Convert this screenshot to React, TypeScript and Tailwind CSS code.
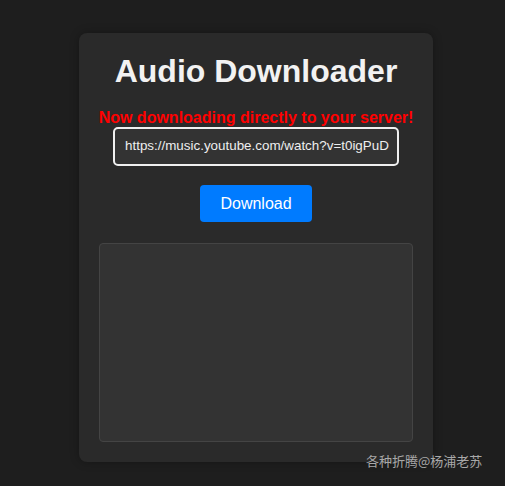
export default function App() {
  return (
    <div className="min-h-[486px] w-full bg-[#1e1e1e] pt-[33px] relative" style={{ fontFamily: '"Liberation Sans", Arial, sans-serif' }}>
      <div className="ml-[79px] w-[354px] rounded-[8px] bg-[#2a2a2a] p-5 flex flex-col items-center shadow-[0_0_10px_rgba(0,0,0,0.3)]">
        <h1 className="text-[32px] leading-[36px] font-bold text-[#f2f2f2]">Audio Downloader</h1>
        <p className="mt-5 text-[16px] leading-[18px] font-bold text-[#ff0000] whitespace-nowrap">Now downloading directly to your server!</p>
        <div className="w-[286px] h-[39px] rounded-[5px] border-2 border-[#f0f0f0] bg-[#333333] pl-[10px] flex items-center overflow-hidden">
          <span className="text-[13.4px] text-[#eeeeee] whitespace-nowrap">https://music.youtube.com/watch?v=t0igPuD</span>
        </div>
        <button className="mt-[19px] w-[112px] h-[37px] rounded-[4px] bg-[#007bff] text-white text-[16px]">Download</button>
        <div className="mt-[21px] w-full h-[199px] rounded-[4px] border border-[#444444] bg-[#333333]"></div>
      </div>
      <div className="absolute left-[366px] top-[451px] text-[13px] text-[#a8a8a8]" style={{ fontFamily: '"Noto Sans CJK SC", sans-serif' }}>各种折腾@杨浦老苏</div>
    </div>
  );
}
